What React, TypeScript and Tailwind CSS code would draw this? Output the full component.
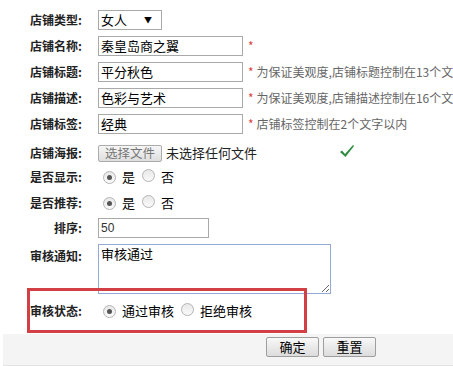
import React from "react";

const font = { fontFamily: '"Noto Sans CJK SC", "Liberation Sans", sans-serif' };

function Label({ text }: { text: string }) {
  return (
    <div className="w-[82px] shrink-0 text-right text-[12px] font-bold text-[#222] leading-none">
      {text}:
    </div>
  );
}

function Radio({ checked }: { checked?: boolean }) {
  return (
    <span className="inline-flex h-[13px] w-[13px] shrink-0 items-center justify-center rounded-full border border-[#b4b4b4] bg-gradient-to-b from-[#e8e8e8] to-[#fafafa]">
      {checked && <span className="h-[5px] w-[5px] rounded-full bg-[#555]" />}
    </span>
  );
}

function Hint({ text }: { text: string }) {
  return (
    <div className="ml-[5px] flex items-center whitespace-nowrap text-[12px] text-[#666]">
      <span className="mr-[3px] text-[#d44]">*</span>
      {text}
    </div>
  );
}

function TextRow({ label, value, hint, star }: { label: string; value: string; hint?: string; star?: boolean }) {
  return (
    <div className="flex h-[20px] items-center">
      <Label text={label} />
      <div className="ml-[16px] flex h-[20px] w-[145px] shrink-0 items-center border border-[#a9a9a9] bg-white pl-[2px] text-[13px] text-black">
        {value}
      </div>
      {hint ? <Hint text={hint} /> : star ? <span className="ml-[5px] text-[12px] text-[#d44]">*</span> : null}
    </div>
  );
}

export default function App() {
  return (
    <div className="relative h-[366px] w-[453px] overflow-hidden bg-white" style={font}>
      <div className="flex flex-col pt-[10px]">
        <div className="flex h-[20px] items-center">
          <Label text="店铺类型" />
          <div className="ml-[16px] flex h-[20px] w-[64px] items-center justify-between border border-[#a9a9a9] bg-white pl-[2px] pr-[9px] text-[13px] text-black">
            <span>女人</span>
            <span className="text-[8px]">▼</span>
          </div>
        </div>
        <div className="mt-[6px]">
          <TextRow label="店铺名称" value="秦皇岛商之翼" star />
        </div>
        <div className="mt-[6px]">
          <TextRow label="店铺标题" value="平分秋色" hint="为保证美观度,店铺标题控制在13个文" />
        </div>
        <div className="mt-[6px]">
          <TextRow label="店铺描述" value="色彩与艺术" hint="为保证美观度,店铺描述控制在16个文" />
        </div>
        <div className="mt-[6px]">
          <TextRow label="店铺标签" value="经典" hint="店铺标签控制在2个文字以内" />
        </div>

        <div className="mt-[7px] flex h-[24px] items-center">
          <Label text="店铺海报" />
          <div className="ml-[16px] flex h-[17px] w-[64px] items-center justify-center rounded-[2px] border border-[#acacac] bg-gradient-to-b from-[#f6f6f6] to-[#dedede] text-[12.5px] text-[#777]">
            选择文件
          </div>
          <span className="ml-[4px] text-[13px] text-[#222]">未选择任何文件</span>
          <svg className="ml-[82px] -mt-[5px]" width="16" height="14" viewBox="0 0 16 14">
            <path d="M1 8 L3 6.5 L6 10 L14 1 L15 2 L6.5 13 Z" fill="#2e8b3e" />
          </svg>
        </div>

        <div className="flex h-[24px] items-center">
          <Label text="是否显示" />
          <div className="ml-[21px] flex items-center text-[13px] text-black">
            <Radio checked />
            <span className="ml-[6px]">是</span>
            <span className="ml-[7px]"><Radio /></span>
            <span className="ml-[6px]">否</span>
          </div>
        </div>

        <div className="flex h-[28px] items-center">
          <Label text="是否推荐" />
          <div className="ml-[21px] flex items-center text-[13px] text-black">
            <Radio checked />
            <span className="ml-[6px]">是</span>
            <span className="ml-[7px]"><Radio /></span>
            <span className="ml-[6px]">否</span>
          </div>
        </div>

        <div className="mt-[1px] flex h-[20px] items-center">
          <Label text="排序" />
          <div className="ml-[16px] flex h-[20px] w-[111px] items-center border border-[#a9a9a9] bg-white pl-[2px] text-[12px] text-[#333]" style={{ fontFamily: '"Liberation Sans", sans-serif' }}>
            50
          </div>
        </div>

        <div className="mt-[6px] flex h-[50px] items-start">
          <div className="pt-[6px]">
            <Label text="审核通知" />
          </div>
          <textarea
            readOnly
            defaultValue="审核通过"
            className="ml-[16px] h-[50px] w-[233px] border border-[#94a9d8] bg-white px-[2px] py-0 text-[13px] leading-[18px] text-black outline-none"
            style={font}
          />
        </div>

        <div className="mt-[6px] flex h-[22px] items-center">
          <Label text="审核状态" />
          <div className="ml-[21px] flex items-center text-[13px] text-black">
            <Radio checked />
            <span className="ml-[6px]">通过审核</span>
            <span className="ml-[7px]"><Radio /></span>
            <span className="ml-[6px]">拒绝审核</span>
          </div>
        </div>

        <div className="ml-[3px] mt-[12px] flex h-[32px] justify-end border-b border-[#e2e2e2] bg-[#f4f4f4] pr-[77px] pt-[3px]">
          <div className="flex h-[20px] w-[53px] items-center justify-center rounded-[2px] border border-[#9e9e9e] bg-gradient-to-b from-[#f8f8f8] to-[#dcdcdc] text-[13px] text-black">
            确定
          </div>
          <div className="ml-[4px] flex h-[20px] w-[53px] items-center justify-center rounded-[2px] border border-[#9e9e9e] bg-gradient-to-b from-[#f8f8f8] to-[#dcdcdc] text-[13px] text-black">
            重置
          </div>
        </div>
      </div>

      <div className="pointer-events-none absolute left-[27px] top-[288px] h-[45px] w-[280px] border-[3px] border-[#d23f44]" />
    </div>
  );
}
